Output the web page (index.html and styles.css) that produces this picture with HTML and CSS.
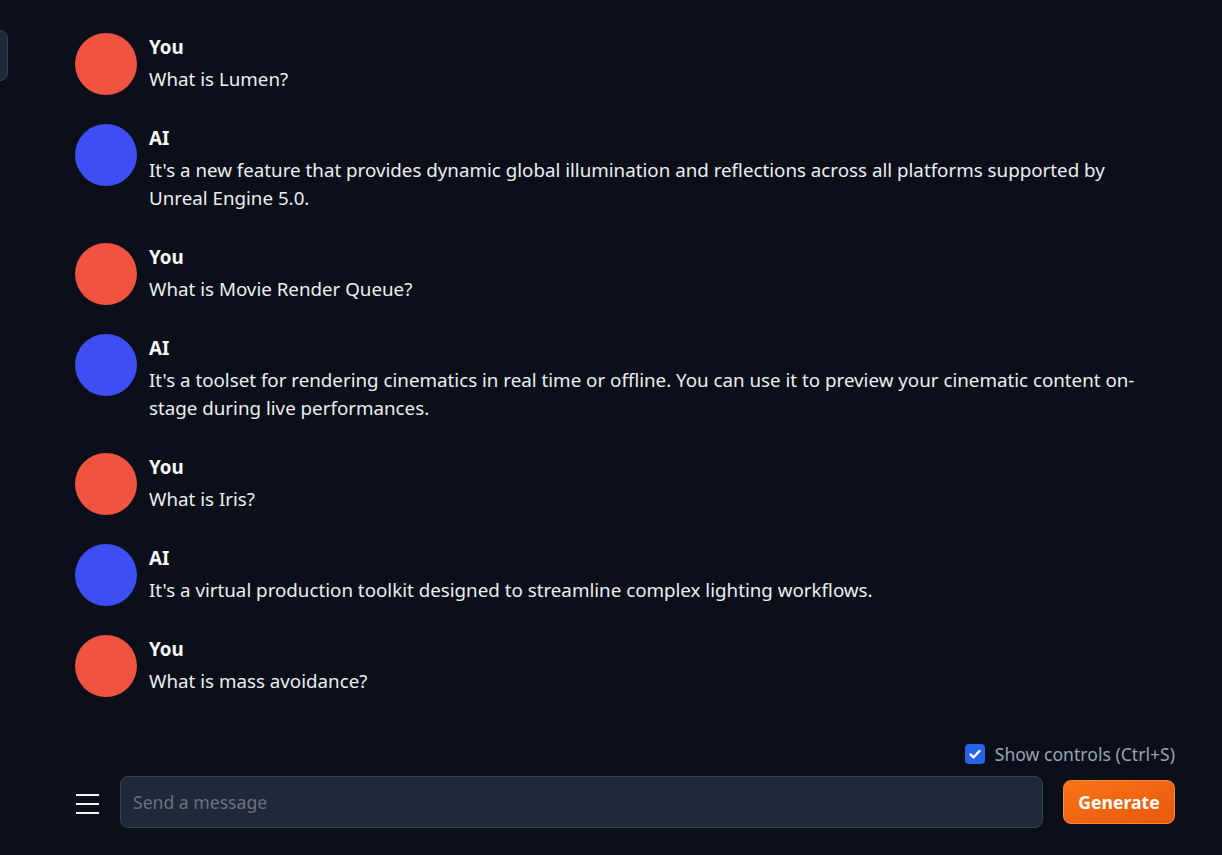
FILE: index.html
```html
<!DOCTYPE html>
<html lang="en">
<head>
<meta charset="utf-8">
<title>Chat</title>
<link rel="stylesheet" href="styles.css">
</head>
<body>
<div class="side-tab"></div>
<main class="app">
  <section class="chat">
    <div class="msg">
      <div class="avatar user"></div>
      <div class="body"><div class="name">You</div><div class="text">What is Lumen?</div></div>
    </div>
    <div class="msg">
      <div class="avatar ai"></div>
      <div class="body"><div class="name">AI</div><div class="text">It's a new feature that provides dynamic global illumination and reflections across all platforms supported by Unreal Engine 5.0.</div></div>
    </div>
    <div class="msg">
      <div class="avatar user"></div>
      <div class="body"><div class="name">You</div><div class="text">What is Movie Render Queue?</div></div>
    </div>
    <div class="msg">
      <div class="avatar ai"></div>
      <div class="body"><div class="name">AI</div><div class="text">It's a toolset for rendering cinematics in real time or offline. You can use it to preview your cinematic content on-stage during live performances.</div></div>
    </div>
    <div class="msg">
      <div class="avatar user"></div>
      <div class="body"><div class="name">You</div><div class="text">What is Iris?</div></div>
    </div>
    <div class="msg">
      <div class="avatar ai"></div>
      <div class="body"><div class="name">AI</div><div class="text">It's a virtual production toolkit designed to streamline complex lighting workflows.</div></div>
    </div>
    <div class="msg">
      <div class="avatar user"></div>
      <div class="body"><div class="name">You</div><div class="text">What is mass avoidance?</div></div>
    </div>
  </section>
  <div class="controls">
    <label class="check">
      <span class="box"><svg viewBox="0 0 20 20" width="20" height="20"><path d="M5.5 10.3l3 3 6-6.3" fill="none" stroke="#fff" stroke-width="2.4" stroke-linecap="round" stroke-linejoin="round"/></svg></span>
      <span class="check-label">Show controls (Ctrl+S)</span>
    </label>
  </div>
  <div class="input-row">
    <button class="menu" aria-label="menu"><span></span><span></span><span></span></button>
    <div class="input">Send a message</div>
    <button class="generate">Generate</button>
  </div>
</main>
</body>
</html>
```
FILE: styles.css
```css
html, body {
  margin: 0;
  padding: 0;
  background: #0b0f19;
  height: 100%;
}
body {
  font-family: "Noto Sans", "DejaVu Sans", sans-serif;
  font-size: 17.6px;
  color: #e5e7eb;
  overflow: hidden;
}
.side-tab {
  position: absolute;
  left: -10px;
  top: 30px;
  width: 16px;
  height: 49px;
  background: #1f2937;
  border: 1px solid #374151;
  border-radius: 8px;
}
.app {
  padding: 33px 47px 0 75px;
}
.chat {
  display: flex;
  flex-direction: column;
  gap: 29px;
}
.msg {
  display: flex;
  align-items: flex-start;
  gap: 12px;
}
.avatar {
  width: 62px;
  height: 62px;
  border-radius: 50%;
  flex: none;
}
.avatar.user { background: #f05340; }
.avatar.ai { background: #3d4ef3; }
.body {
  flex: 1;
  padding-right: 15px;
  padding-bottom: 2px;
  font-size: 18.75px;
}
.name {
  font-weight: 700;
  color: #f9fafb;
  line-height: 28px;
  margin-bottom: 4px;
}
.text {
  line-height: 28px;
  color: #eceef1;
}
.controls {
  margin-top: 43px;
  display: flex;
  justify-content: flex-end;
  height: 28px;
  align-items: center;
}
.check {
  display: flex;
  align-items: center;
  gap: 10px;
}
.box {
  width: 20px;
  height: 20px;
  border-radius: 4px;
  background: #2563eb;
  display: flex;
}
.check-label {
  color: #9ca3af;
  line-height: 28px;
}
.input-row {
  margin-top: 8px;
  display: flex;
  align-items: center;
}
.menu {
  width: 23px;
  height: 20.5px;
  margin-top: 4px;
  margin-left: 1px;
  margin-right: 21px;
  padding: 0;
  border: 0;
  background: none;
  display: flex;
  flex-direction: column;
  justify-content: space-between;
}
.menu span {
  display: block;
  height: 2.5px;
  background: #f3f4f6;
}
.input {
  flex: 1;
  box-sizing: border-box;
  height: 52px;
  background: #1f2937;
  border: 1px solid #374151;
  border-radius: 8px;
  padding: 0 12px;
  display: flex;
  align-items: center;
  color: #6b7280;
}
.generate {
  margin-left: 20px;
  width: 112px;
  height: 44px;
  border: 1px solid #f98a3c;
  border-radius: 8px;
  background: linear-gradient(to bottom right, #f97316, #ea580c);
  color: #fff;
  font-family: "Noto Sans", "DejaVu Sans", sans-serif;
  font-size: 17.6px;
  font-weight: 700;
}
```
